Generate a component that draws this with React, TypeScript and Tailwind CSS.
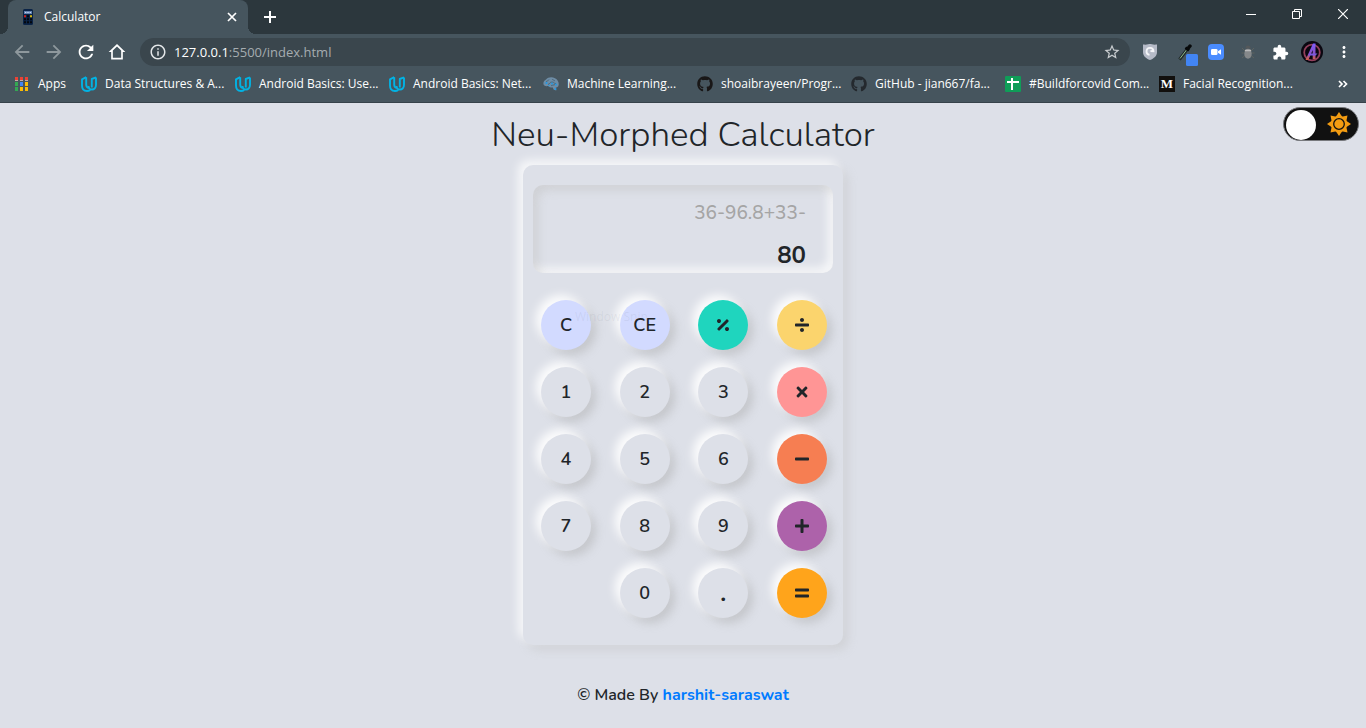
import React, { useState } from "react";
import {
  MdArrowBack,
  MdArrowForward,
  MdRefresh,
  MdInfoOutline,
  MdStarBorder,
  MdExtension,
  MdMoreVert,
} from "react-icons/md";
import {
  FaGithub,
  FaPercentage,
  FaDivide,
  FaTimes,
  FaMinus,
  FaPlus,
  FaEquals,
} from "react-icons/fa";

function CalculatorFavicon() {
  return (
    <svg width="16" height="16" viewBox="0 0 16 16" aria-hidden="true">
      <rect x="3" y="0" width="10" height="16" rx="1.5" fill="#0a2346" />
      <rect x="4" y="2" width="8" height="3" fill="#5f7fae" />
      <path d="M5 3.5h1.4M7.3 3.5h1.4M9.6 3.5H11" stroke="#c5d6ee" />
      <path d="M4 7.2h2" stroke="#d01c1c" strokeWidth="2" />
      <path d="M10 7.2h2" stroke="#d8b60c" strokeWidth="2" />
      <path d="M7 7.2h2M4 10.3h2M7 10.3h2M10 10.3h2M4 13.3h2M7 13.3h2M10 13.3h2" stroke="#03070d" strokeWidth="2" />
    </svg>
  );
}

function HomeIcon() {
  return (
    <svg width="20" height="20" viewBox="0 0 24 24" fill="#fff" aria-hidden="true">
      <path fillRule="evenodd" d="M12 2.500 2 12h3v9h14v-9h3zM12 5.400l5 4.800V19H7v-8.800z" />
    </svg>
  );
}

function UdacityIcon() {
  return (
    <svg width="16" height="16" viewBox="0 0 16 16" fill="none" stroke="#02b3e4" strokeWidth="1.900" strokeLinejoin="round" aria-hidden="true">
      <path d="M5.200 1.200 1 3.300v6.200c0 3.300 2 5.500 5 5.500 1.300 0 2.300-.300 3.300-1" />
      <path d="M5.200 1.200v7.300c0 2 1 3.200 2.600 3.200" />
      <path d="M15 1.500v7.300c0 3-1.900 4.700-4 4.700S7.500 12 7.500 10" />
      <path d="M15 1.300 10.800 3v8.500" />
    </svg>
  );
}

function AppsIcon() {
  const colors = ["#ea4335", "#ea4335", "#ea4335", "#34a853", "#4285f4", "#fbbc05", "#34a853", "#fbbc05", "#fbbc05"];
  return (
    <svg width="14" height="14" viewBox="0 0 14 14" aria-hidden="true">
      {colors.map((c, i) => (
        <rect key={i} x={(i % 3) * 5} y={Math.floor(i / 3) * 5} width="3" height="4" fill={c} />
      ))}
      <path d="M0 3.500h3M5 3.500h3M10 3.500h3" stroke="#c9a9a5" />
    </svg>
  );
}

function BrainIcon() {
  return (
    <svg width="16" height="16" viewBox="0 0 16 16" aria-hidden="true">
      <path
        d="M3 3.500C5 1 9 .600 12 2.200c3 1.300 4.300 4.600 3.500 7.300-.300 1.400-1.600 2-2.700 2l.500 3-2.500-.700-1.300-2.600c-2 .600-3.500.100-4.300-1.100C2.500 10.600.200 9.800.400 7.300.500 5.500 1.500 4.300 3 3.500z"
        fill="#6e8da6"
      />
      <path d="M3 6c1-1.500 2.500-1 3-2.500M5 8.500C7 8 6.500 6 9 6s2 2 4 1.500M9 3c.500 1 2 1 3 2M8 10c1-1.500 3-.500 4-1.500" stroke="#45606f" fill="none" strokeWidth=".8" />
      <g fill="#1d9bea">
        <circle cx="3.500" cy="7" r="1" />
        <circle cx="9" cy="7.500" r=".9" />
        <circle cx="13" cy="8.600" r="1" />
        <circle cx="12.500" cy="13" r="1" />
        <circle cx="6" cy="9.500" r=".7" />
      </g>
    </svg>
  );
}

function SheetIcon() {
  return (
    <svg width="16" height="16" viewBox="0 0 16 16" aria-hidden="true">
      <rect width="16" height="16" rx="1" fill="#0f9d58" />
      <path d="M2 6h12M7 2v12" stroke="#fff" strokeWidth="2" />
    </svg>
  );
}

function MediumIcon() {
  return (
    <span aria-hidden="true" className="flex h-4 w-4 items-center justify-center bg-[#12100e] font-['Liberation_Serif',serif] text-[13px] leading-4 font-bold text-white">
      M
    </span>
  );
}

function ShieldIcon() {
  return (
    <svg width="16" height="18" viewBox="0 0 16 18" aria-hidden="true">
      <path d="M1 1.500C5 2 6.500 1 8 1s3 1 7 .500V9c0 4-3 6.500-7 8-4-1.500-7-4-7-8z" fill="#b5bac7" />
      <path d="M7.500 11.800A3.500 3.500 0 1 1 11.500 8.300L8.500 8" fill="none" stroke="#f4f5f8" strokeWidth="1.800" />
    </svg>
  );
}

function EyedropperIcon() {
  return (
    <svg width="20" height="22" viewBox="0 0 20 22" aria-hidden="true">
      <path d="M1.500 15.500 9 5.500" stroke="#20272a" strokeWidth="3" />
      <path d="M2 14.500 8.500 6" stroke="#8fbf8d" strokeWidth="1" />
      <path d="M7.500 3.500 11 6.500" stroke="#07090a" strokeWidth="2.500" />
      <path d="M9.500 5 12 2" stroke="#07090a" strokeWidth="3.500" strokeLinecap="round" />
      <rect x="8" y="10" width="12" height="12" rx="1.500" fill="#4285f4" />
    </svg>
  );
}

function ZoomIcon() {
  return (
    <svg width="16" height="16" viewBox="0 0 16 16" aria-hidden="true">
      <rect width="16" height="16" rx="4" fill="#4a8cff" />
      <rect x="3" y="5" width="6.500" height="6" rx="1.300" fill="#fff" />
      <path d="m10 7.300 3-2v5.400l-3-2z" fill="#fff" />
    </svg>
  );
}

function BugIcon() {
  return (
    <svg width="16" height="16" viewBox="0 0 16 16" aria-hidden="true">
      <path d="M2 4l3 3M14 4l-3 3M1.500 9H4M14.500 9H12M2 14l3-2.500M14 14l-3-2.500" stroke="#5d625f" />
      <path d="M5.500 4.500a2.500 3 0 0 1 5 0z" fill="#54585a" />
      <ellipse cx="8" cy="9.700" rx="3.700" ry="5" fill="#85888a" />
      <path d="M5 6.500h6" stroke="#b9babb" strokeWidth="1.500" />
    </svg>
  );
}

function ProfileIcon() {
  return (
    <svg width="22" height="22" viewBox="0 0 22 22" aria-hidden="true">
      <defs>
        <linearGradient id="avatarStroke" x1="0" y1="0" x2="0" y2="1">
          <stop offset="0" stopColor="#7a5cff" />
          <stop offset=".6" stopColor="#8a50c4" />
          <stop offset="1" stopColor="#d9603f" />
        </linearGradient>
      </defs>
      <circle cx="11" cy="11" r="11" fill="#0a0710" />
      <circle cx="11" cy="11.500" r="7.800" fill="none" stroke="#93405c" strokeWidth="1.800" />
      <path d="M4.500 19 12 2.500h2.500V18h-2.800V9L7.300 19z" fill="url(#avatarStroke)" />
      <path d="M8 12.500h8.500l-2 2H7z" fill="#7a58e0" />
    </svg>
  );
}

function SunIcon() {
  const rays = [0, 45, 90, 135, 180, 225, 270, 315];
  return (
    <svg width="24" height="24" viewBox="0 0 24 24" fill="#f39c12" aria-hidden="true">
      {rays.map((r) => (
        <path key={r} d="M12 0 16 6H8z" transform={`rotate(${r} 12 12)`} />
      ))}
      <circle cx="12" cy="12" r="8" />
      <circle cx="12" cy="12" r="5.300" fill="none" stroke="#111" strokeWidth="1.300" />
    </svg>
  );
}

const bookmarks = [
  { label: "Data Structures & A...", icon: <UdacityIcon /> },
  { label: "Android Basics: Use...", icon: <UdacityIcon /> },
  { label: "Android Basics: Net...", icon: <UdacityIcon /> },
  { label: "Machine Learning...", icon: <BrainIcon /> },
  { label: "shoaibrayeen/Progr...", icon: <FaGithub size={16} color="#191717" /> },
  { label: "GitHub - jian667/fa...", icon: <FaGithub size={16} color="#24292e" /> },
  { label: "#Buildforcovid Com...", icon: <SheetIcon /> },
  { label: "Facial Recognition...", icon: <MediumIcon /> },
];

function TitleBar() {
  return (
    <div className="flex h-[34px] justify-between bg-[#2c373d] pl-2">
      <div className="flex">
        <div className="relative flex w-60 items-center rounded-t-lg bg-[#46555e] pr-[10px] pl-3">
          <span className="absolute bottom-0 -left-2 h-2 w-2 bg-[radial-gradient(circle_at_0_0,#2c373d_8px,#46555e_8px)]" />
          <span className="absolute -right-2 bottom-0 h-2 w-2 bg-[radial-gradient(circle_at_100%_0,#2c373d_8px,#46555e_8px)]" />
          <CalculatorFavicon />
          <span className="ml-2 flex-1 text-[12px] text-white">Calculator</span>
          <button aria-label="Close tab" className="flex h-3 w-3 items-center justify-center">
            <svg width="10" height="10" viewBox="0 0 10 10" stroke="#fff" strokeWidth="1.700">
              <path d="m1 1 8 8M9 1 1 9" />
            </svg>
          </button>
        </div>
        <button aria-label="New tab" className="flex w-11 items-center justify-center">
          <svg width="12" height="12" viewBox="0 0 12 12" stroke="#fff" strokeWidth="2">
            <path d="M6 0v12M0 6h12" />
          </svg>
        </button>
      </div>
      <div className="flex h-7">
        <button aria-label="Minimize" className="flex w-[46px] items-center justify-center">
          <svg width="10" height="10" viewBox="0 0 10 10" stroke="#fff"><path d="M0 5.500h10" /></svg>
        </button>
        <button aria-label="Restore" className="flex w-[46px] items-center justify-center">
          <svg width="10" height="10" viewBox="0 0 10 10" stroke="#fff" fill="none">
            <path d="M.5 2.500h7v7h-7zM2.500 2.500v-2h7v7h-2" />
          </svg>
        </button>
        <button aria-label="Close" className="flex w-[46px] items-center justify-center">
          <svg width="10" height="10" viewBox="0 0 10 10" stroke="#fff" strokeWidth="1.200"><path d="m0 0 10 10M10 0 0 10" /></svg>
        </button>
      </div>
    </div>
  );
}

function Toolbar() {
  return (
    <div className="flex h-9 items-center pr-[13px] pl-[11px]">
      <div className="flex w-[129px] items-center gap-[10px]">
        <button aria-label="Back" className="text-[#8e989d]"><MdArrowBack size={22} /></button>
        <button aria-label="Forward" className="text-[#8e989d]"><MdArrowForward size={22} /></button>
        <button aria-label="Reload" className="text-white"><MdRefresh size={22} /></button>
        <button aria-label="Home"><HomeIcon /></button>
      </div>
      <div className="flex h-7 flex-1 items-center rounded-full bg-[#3a464d] px-[9px]">
        <MdInfoOutline size={18} color="#e3e6e8" />
        <div className="relative ml-[7px] flex-1 text-[13px] leading-5">
          <input
            aria-label="Address"
            defaultValue="127.0.0.1:5500/index.html"
            className="w-full bg-transparent text-transparent caret-white outline-none"
          />
          <span className="pointer-events-none absolute inset-0 text-[#a5acb0]">
            <span className="text-white">127.0.0.1</span>:5500/index.html
          </span>
        </div>
        <button aria-label="Bookmark this page"><MdStarBorder size={18} color="#c9cdd0" /></button>
      </div>
      <div className="ml-3 flex items-center">
        <button aria-label="Privacy" className="flex w-8 justify-start"><ShieldIcon /></button>
        <button aria-label="Color picker" className="flex w-[34px] justify-start pt-[6px] pl-1"><EyedropperIcon /></button>
        <button aria-label="Zoom" className="flex w-8 justify-start"><ZoomIcon /></button>
        <button aria-label="Debugger" className="flex w-8 justify-start"><BugIcon /></button>
        <button aria-label="Extensions" className="flex w-[29px] justify-start"><MdExtension size={17} color="#fff" /></button>
        <button aria-label="Profile" className="flex w-[34px] justify-start"><ProfileIcon /></button>
        <button aria-label="Menu"><MdMoreVert size={18} color="#fff" /></button>
      </div>
    </div>
  );
}

function Bookmarks() {
  return (
    <nav className="flex h-[33px] items-center border-b border-[#36424a] pr-[18px] pb-1 pl-[15px] text-[12px] text-white">
      <a href="#apps" className="flex w-[66px] items-center gap-[9px]"><AppsIcon />Apps</a>
      {bookmarks.map((b) => (
        <a key={b.label} href="#bookmark" className="flex w-[154px] items-center gap-2 whitespace-nowrap">
          {b.icon}
          {b.label}
        </a>
      ))}
      <button aria-label="More bookmarks" className="ml-auto">
        <svg width="10" height="8" viewBox="0 0 10 8" stroke="#fff" strokeWidth="1.700" fill="none">
          <path d="m1 1 3 3-3 3M5.500 1l3 3-3 3" />
        </svg>
      </button>
    </nav>
  );
}

const neutral = "bg-[#dde0e8]";
const keys: ({ label: string; face: React.ReactNode; tone: string } | null)[] = [
  { label: "C", face: "C", tone: "bg-[#d2daff]" },
  { label: "CE", face: "CE", tone: "bg-[#d2daff]" },
  { label: "Percent", face: <FaPercentage size={16} />, tone: "bg-[#1fd5be]" },
  { label: "Divide", face: <FaDivide size={16} />, tone: "bg-[#fbd46d]" },
  { label: "1", face: "1", tone: neutral },
  { label: "2", face: "2", tone: neutral },
  { label: "3", face: "3", tone: neutral },
  { label: "Multiply", face: <FaTimes size={16} />, tone: "bg-[#ff9595]" },
  { label: "4", face: "4", tone: neutral },
  { label: "5", face: "5", tone: neutral },
  { label: "6", face: "6", tone: neutral },
  { label: "Subtract", face: <FaMinus size={16} />, tone: "bg-[#f67e52]" },
  { label: "7", face: "7", tone: neutral },
  { label: "8", face: "8", tone: neutral },
  { label: "9", face: "9", tone: neutral },
  { label: "Add", face: <FaPlus size={16} />, tone: "bg-[#ad62aa]" },
  null,
  { label: "0", face: "0", tone: neutral },
  { label: "Decimal point", face: <span className="text-[24px] leading-6 font-bold">.</span>, tone: neutral },
  { label: "Equals", face: <FaEquals size={16} />, tone: "bg-[#ffa41b]" },
];

function Calculator() {
  return (
    <section className="w-80 rounded-[10px] bg-[#dde0e8] px-[10px] pt-5 pb-[27px] shadow-[-5px_-5px_10px_rgba(255,255,255,0.75),5px_5px_10px_rgba(190,190,190,0.4)]">
      <div className="h-[88px] rounded-[10px] pr-[27px] text-right shadow-[inset_5px_5px_10px_rgba(190,190,190,0.45),inset_-5px_-5px_10px_rgba(255,255,255,0.75)]">
        <p className="pt-[14px] text-[19px] leading-7 font-medium text-[#a5a5a5]">36-96.8+33-</p>
        <p className="mt-[14px] text-[24px] leading-7 font-bold">80</p>
      </div>
      <div className="relative mt-[27px] grid grid-cols-[50px_50px_50px_50px] justify-between gap-y-[17px] pr-[6px] pl-2">
        {keys.map((k, i) =>
          k ? (
            <button
              key={k.label}
              aria-label={k.label}
              className={`flex h-[50px] w-[50px] items-center justify-center rounded-full text-[18px] font-semibold shadow-[-5px_-5px_10px_rgba(255,255,255,0.9),5px_5px_10px_rgba(160,160,160,0.4)] ${k.tone}`}
            >
              {k.face}
            </button>
          ) : (
            <span key={i} />
          ),
        )}
        <span className="pointer-events-none absolute top-2 left-[42px] font-['Open_Sans',sans-serif] text-[12px] text-gray-500/10">Window Snip</span>
      </div>
    </section>
  );
}

function ThemeToggle() {
  const [dark, setDark] = useState(false);
  return (
    <label className="absolute top-1 right-[7px] flex h-[34px] w-[76px] cursor-pointer items-center justify-between rounded-full border border-[#77797d] bg-[#111] pr-[7px] pl-[2px]">
      <input
        type="checkbox"
        aria-label="Dark theme"
        checked={dark}
        onChange={(e) => setDark(e.target.checked)}
        className="absolute inset-0 h-full w-full cursor-pointer appearance-none"
      />
      <span className="mt-[2px] h-[30px] w-[30px] rounded-full bg-white" />
      <SunIcon />
    </label>
  );
}

export default function App() {
  return (
    <div className="flex min-h-screen flex-col bg-[#dde0e8] font-['Open_Sans',sans-serif]">
      <header className="bg-[#46555e]">
        <TitleBar />
        <Toolbar />
        <Bookmarks />
      </header>
      <main className="relative flex flex-1 flex-col items-center overflow-hidden font-['Nunito','Open_Sans',sans-serif] text-[#212529]">
        <ThemeToggle />
        <h1 className="mt-2 mb-[6px] text-[35px] leading-12 font-[350]">Neu-Morphed Calculator</h1>
        <Calculator />
        <footer className="mt-[38px] text-[16px] leading-6 font-semibold">
          © Made By <a href="https://github.com/harshit-saraswat" className="font-bold text-[#007bff]">harshit-saraswat</a>
        </footer>
      </main>
    </div>
  );
}
